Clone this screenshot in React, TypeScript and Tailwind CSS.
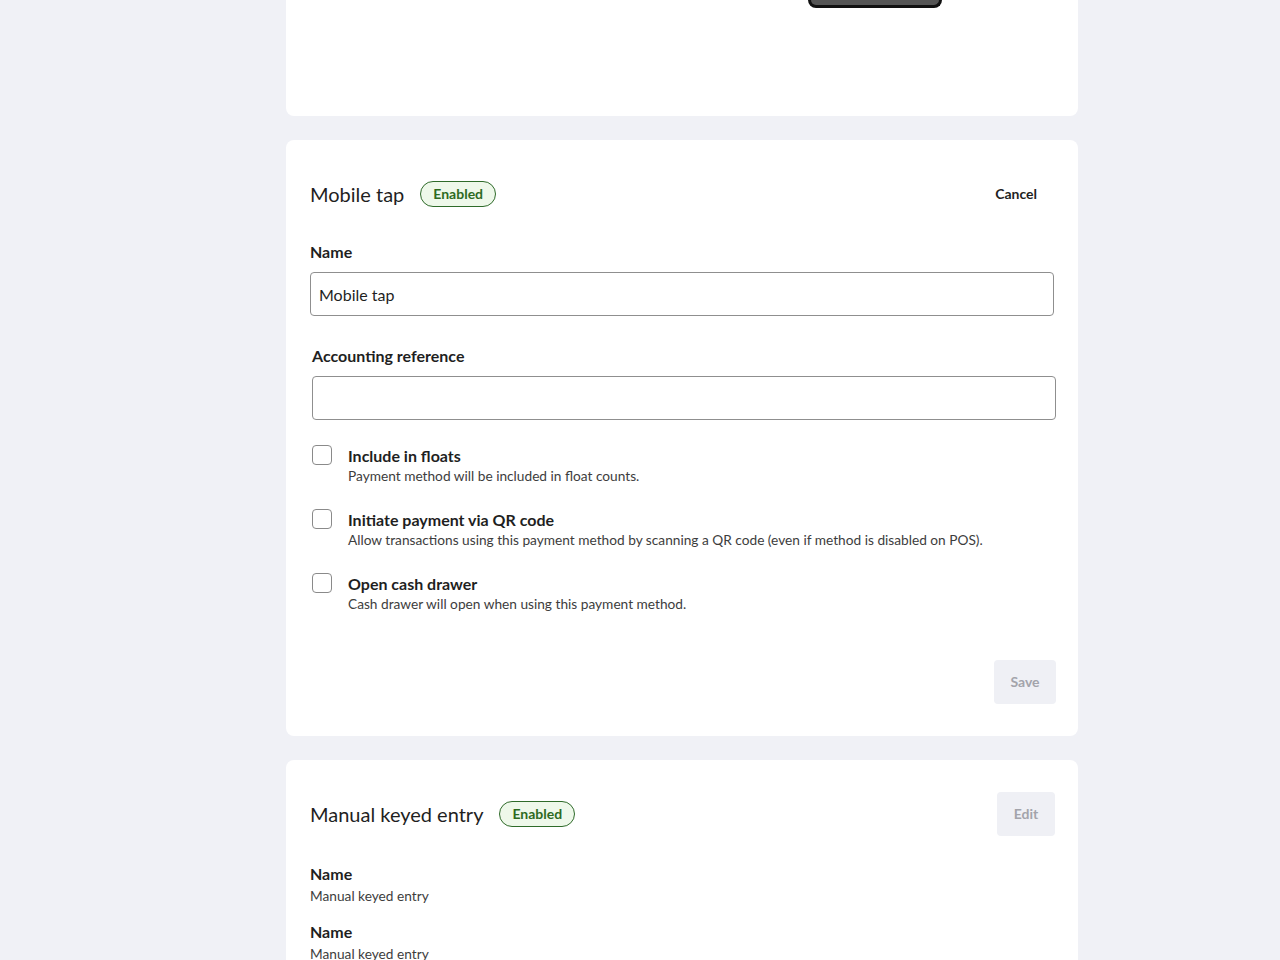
function Badge() {
  return (
    <span className="inline-flex items-center h-[26px] px-3 rounded-full border border-[#2f6b2a] bg-[#eef8ea] text-[#2d6a1f] text-sm font-bold leading-none">
      Enabled
    </span>
  );
}

function CheckRow({ title, desc }: { title: string; desc: string }) {
  return (
    <div className="flex items-start ml-[2px]">
      <div className="w-5 h-5 mt-[1px] rounded-[4px] border border-[#8a8a8a] bg-white shrink-0" />
      <div className="ml-4">
        <div className="text-base font-bold leading-6 text-[#1f1f1f]">{title}</div>
        <div className="text-[13.7px] leading-5 -mt-[2px] text-[#3d3d3d]">{desc}</div>
      </div>
    </div>
  );
}

export default function App() {
  return (
    <div
      className="min-h-screen bg-[#f0f1f6] pb-10"
      style={{ fontFamily: "Lato, 'Open Sans', sans-serif" }}
    >
      <div className="w-[792px] ml-[286px] flex flex-col gap-6">
        {/* Previous card (bottom of a device preview) */}
        <div className="bg-white rounded-b-lg h-[116px]">
          <div className="ml-[522px] w-[134px] h-[8px] rounded-b-[14px] border-x-[3px] border-b-[3px] border-[#111] bg-[#555]" />
        </div>

        {/* Mobile tap – editing */}
        <div className="bg-white rounded-lg pt-8 pb-8 px-6">
          <div className="flex items-center justify-between h-11">
            <div className="flex items-center gap-4">
              <h2 className="text-xl text-[#1f1f1f]">Mobile tap</h2>
              <Badge />
            </div>
            <button className="h-11 px-[17px] text-sm font-bold text-[#1f1f1f]">Cancel</button>
          </div>

          <label className="block mt-6 text-base font-bold leading-6 text-[#1f1f1f]">Name</label>
          <input
            className="mt-2 w-full h-11 px-2 rounded-[4px] border border-[#8f8f8f] text-base text-[#1f1f1f] outline-none"
            defaultValue="Mobile tap"
          />

          <div className="ml-[2px] -mr-[2px]">
            <label className="block mt-7 text-base font-bold leading-6 text-[#1f1f1f]">Accounting reference</label>
            <input className="mt-2 w-full h-11 px-2 rounded-[4px] border border-[#8f8f8f] text-base outline-none" />
          </div>

          <div className="mt-6 flex flex-col gap-[22px]">
            <CheckRow title="Include in floats" desc="Payment method will be included in float counts." />
            <CheckRow
              title="Initiate payment via QR code"
              desc="Allow transactions using this payment method by scanning a QR code (even if method is disabled on POS)."
            />
            <CheckRow title="Open cash drawer" desc="Cash drawer will open when using this payment method." />
          </div>

          <div className="flex justify-end mt-[46px] -mr-[2px]">
            <button className="h-11 w-[62px] rounded-[4px] bg-[#eff0f5] text-sm font-bold text-[#a3a4ab]">Save</button>
          </div>
        </div>

        {/* Manual keyed entry */}
        <div className="bg-white rounded-t-lg pt-8 px-6 pb-6">
          <div className="flex items-center justify-between h-11">
            <div className="flex items-center gap-4">
              <h2 className="text-xl text-[#1f1f1f]">Manual keyed entry</h2>
              <Badge />
            </div>
            <button className="h-11 w-[58px] mr-[-1px] rounded-[4px] bg-[#eff0f5] text-sm font-bold text-[#a3a4ab]">Edit</button>
          </div>

          <div className="mt-[26px]">
            <div className="text-base font-bold leading-6 text-[#1f1f1f]">Name</div>
            <div className="text-[13.7px] leading-5 text-[#3d3d3d]">Manual keyed entry</div>
          </div>
          <div className="mt-[14px]">
            <div className="text-base font-bold leading-6 text-[#1f1f1f]">Name</div>
            <div className="text-[13.7px] leading-5 text-[#3d3d3d]">Manual keyed entry</div>
          </div>
        </div>
      </div>
    </div>
  );
}
